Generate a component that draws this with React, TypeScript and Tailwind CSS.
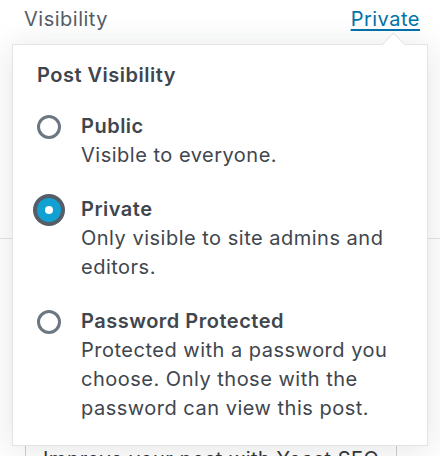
const options = [
  {
    title: "Public",
    desc: "Visible to everyone.",
    checked: false,
  },
  {
    title: "Private",
    desc: "Only visible to site admins and editors.",
    checked: true,
  },
  {
    title: "Password Protected",
    desc: "Protected with a password you choose. Only those with the password can view this post.",
    checked: false,
  },
];

function Radio({ checked }: { checked: boolean }) {
  if (checked) {
    return (
      <span className="w-[24px] h-[24px] rounded-full bg-[#11a0d2] shadow-[0_0_0_4px_#555d66] flex items-center justify-center">
        <span className="w-[8px] h-[8px] rounded-full bg-white" />
      </span>
    );
  }
  return <span className="w-[24px] h-[24px] rounded-full border-[3.5px] border-[#6c7781] bg-white" />;
}

export default function App() {
  return (
    <div className="relative w-[440px] h-[456px] overflow-hidden bg-white text-[20px] leading-[29px] tracking-[0.5px] font-['Inter',sans-serif]">
      {/* panel behind the popover */}
      <div className="flex justify-between pl-[24px] pr-[20px] pt-[5px] h-[44px]">
        <span className="text-[#555d66]">Visibility</span>
        <a href="#" className="text-[#0073aa] underline underline-offset-[3px]">
          Private
        </a>
      </div>
      <div className="h-[195px] border-b border-[#e2e4e7]" />
      <div className="mt-[197px] ml-[25px] w-[372px] border border-[#ccd0d4] px-[17px] py-[8px] text-[#32373c] whitespace-nowrap">
        Improve your post with Yoast SEO
      </div>

      {/* popover */}
      <div className="absolute left-[12px] top-[44px] w-[416px] bg-white border border-[#e2e4e7] shadow-[0_3px_30px_rgba(25,30,35,0.12)] pl-[24px] pr-[24px] pt-[16px] pb-[22px] text-[#40464d]">
        <span className="absolute -top-[9px] left-[372px] w-[17px] h-[17px] rotate-45 bg-white border-l border-t border-[#e2e4e7]" />
        <div className="font-semibold">Post Visibility</div>
        <div className="flex flex-col gap-[25px] mt-[22px]">
          {options.map((opt) => (
            <div key={opt.title} className="flex items-start">
              <div className="w-[24px] h-[29px] mr-[20px] flex items-center shrink-0">
                <Radio checked={opt.checked} />
              </div>
              <div>
                <div className="font-semibold">{opt.title}</div>
                <div>{opt.desc}</div>
              </div>
            </div>
          ))}
        </div>
      </div>
    </div>
  );
}
